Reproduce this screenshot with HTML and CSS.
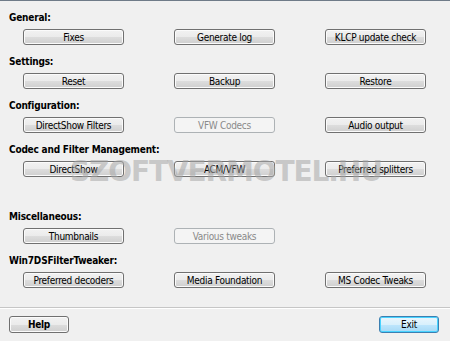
FILE: index.html
```html
<!DOCTYPE html>
<html>
<head>
<meta charset="utf-8">
<link rel="stylesheet" href="styles.css">
</head>
<body>
<div class="window">
  <div class="main">
    <div class="section">
      <div class="label">General:</div>
      <div class="row">
        <button class="btn">Fixes</button>
        <button class="btn">Generate log</button>
        <button class="btn">KLCP update check</button>
      </div>
    </div>
    <div class="section">
      <div class="label">Settings:</div>
      <div class="row">
        <button class="btn">Reset</button>
        <button class="btn">Backup</button>
        <button class="btn">Restore</button>
      </div>
    </div>
    <div class="section">
      <div class="label">Configuration:</div>
      <div class="row">
        <button class="btn">DirectShow Filters</button>
        <button class="btn disabled">VFW Codecs</button>
        <button class="btn">Audio output</button>
      </div>
    </div>
    <div class="section">
      <div class="label">Codec and Filter Management:</div>
      <div class="row">
        <button class="btn">DirectShow</button>
        <button class="btn">ACM/VFW</button>
        <button class="btn">Preferred splitters</button>
      </div>
    </div>
    <div class="section spaced">
      <div class="label">Miscellaneous:</div>
      <div class="row">
        <button class="btn">Thumbnails</button>
        <button class="btn disabled">Various tweaks</button>
      </div>
    </div>
    <div class="section">
      <div class="label">Win7DSFilterTweaker:</div>
      <div class="row">
        <button class="btn">Preferred decoders</button>
        <button class="btn">Media Foundation</button>
        <button class="btn">MS Codec Tweaks</button>
      </div>
    </div>
  </div>
  <div class="footer">
    <button class="btn small bold">Help</button>
    <button class="btn small default">Exit</button>
  </div>
  <div class="watermark">SZOFTVERMOTEL.HU</div>
</div>
</body>
</html>
```

FILE: styles.css
```css
html, body {
  margin: 0;
  padding: 0;
  background: #f0f0f0;
}
.window {
  position: relative;
  width: 450px;
  height: 341px;
  box-sizing: border-box;
  border-top: 1px solid #6f7b88;
  background: #f0f0f0;
  font-family: "DejaVu Sans Condensed", "DejaVu Sans", sans-serif;
  font-size: 10px;
  color: #000;
  overflow: hidden;
}
.main {
  padding-top: 10px;
  height: 306px;
  box-sizing: border-box;
}
.section {
  margin-bottom: 10px;
}
.section.spaced {
  margin-top: 33px;
}
.label {
  font-family: "DejaVu Sans Condensed", "DejaVu Sans", sans-serif;
  font-weight: bold;
  font-size: 10px;
  letter-spacing: -0.2px;
  line-height: 14px;
  height: 14px;
  padding-left: 9px;
  margin-bottom: 4px;
}
.row {
  display: grid;
  grid-template-columns: repeat(3, 101px);
  column-gap: 50px;
  padding-left: 23px;
}
.btn {
  height: 16px;
  width: 101px;
  padding: 0;
  margin: 0;
  box-sizing: border-box;
  border: 1px solid #707070;
  border-radius: 3px;
  background: linear-gradient(to bottom, #f2f2f2 0%, #ebebeb 50%, #dddddd 51%, #cfcfcf 100%);
  box-shadow: inset 0 0 0 1px #fbfbfb;
  font-family: "DejaVu Sans Condensed", "DejaVu Sans", sans-serif;
  font-size: 10px;
  letter-spacing: -0.3px;
  line-height: 13px;
  color: #000;
  text-align: center;
  white-space: nowrap;
}
.btn.disabled {
  border-color: #adb2b5;
  background: #f4f4f4;
  box-shadow: none;
  color: #8a8a8a;
}
.footer {
  border-top: 1px solid #c6c6c6;
  box-shadow: inset 0 1px 0 #ffffff;
  display: flex;
  justify-content: space-between;
  padding: 8px 11px 0 9px;
  height: 34px;
  box-sizing: border-box;
}
.btn.small {
  width: 60px;
  height: 17px;
}
.btn.bold {
  font-weight: bold;
}
.btn.default {
  border-color: #3c7fb1;
  background: linear-gradient(to bottom, #eaf6fd 0%, #d9f0fc 50%, #bee6fd 51%, #a7d9f5 100%);
  box-shadow: inset 0 0 0 1px #48d3ff;
}
.watermark {
  position: absolute;
  left: 70px;
  top: 154px;
  font-family: "DejaVu Sans", sans-serif;
  font-weight: bold;
  font-size: 28px;
  letter-spacing: -1.1px;
  color: rgba(165, 165, 165, 0.55);
  pointer-events: none;
  white-space: nowrap;
}
```
